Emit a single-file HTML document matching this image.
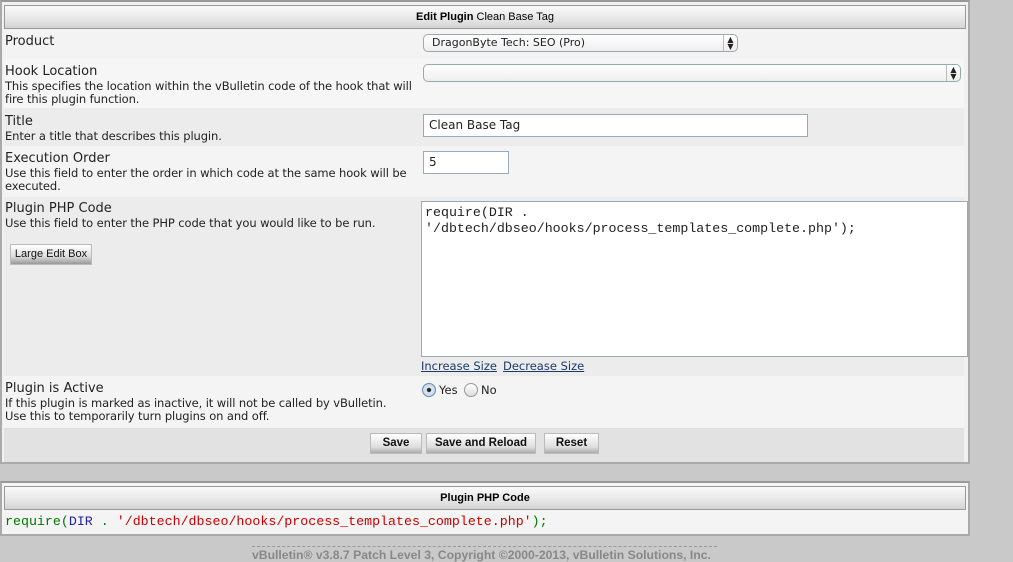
<!DOCTYPE html>
<html><head><meta charset="utf-8"><style>
*{box-sizing:border-box;margin:0;padding:0}
body{width:1013px;height:562px;background:#c9c9c9;font-family:"DejaVu Sans","Liberation Sans",sans-serif;position:relative;overflow:hidden;color:#222}
.a{position:absolute}
.panel{position:absolute;left:0;width:970px;border:2px solid #aaa;background:#fff;border-top-color:#999}
.hdr{position:absolute;left:2px;right:2px;height:24px;background:linear-gradient(#fafafa,#e6e6e6 60%,#d4d4d4);border:1px solid #999;font-family:"Liberation Sans",sans-serif;font-size:11px;text-align:center;line-height:23px;color:#000}
.row{position:absolute;left:2px;right:4px}
.l{position:absolute;left:1px;font-size:13px;color:#222}
.d{position:absolute;left:1px;font-size:11.5px;line-height:13px;color:#222;letter-spacing:-0.1px;white-space:nowrap}
.sel{position:absolute;height:18px;border:1px solid #9aa;border-radius:5px;background:linear-gradient(#fff,#eee);font-size:11px;line-height:16px;padding-left:8px}
.arr{position:absolute;right:0;top:0;width:14px;height:16px;border-left:1px solid #bbb;font-size:8px;line-height:7px;text-align:center;padding-top:1px}
.inp{position:absolute;height:23px;border:1px solid #9ab;background:#fff;font-size:12px;line-height:21px;padding-left:5px}
.btn{position:absolute;height:21px;background:linear-gradient(#fff,#ddd 70%,#aaa);border:1px solid #bbb;font-family:"Liberation Sans",sans-serif;font-weight:bold;font-size:11.5px;text-align:center;line-height:19px;color:#111;white-space:nowrap}
.mono{font-family:"Liberation Mono",monospace;font-size:13.3px}
</style></head><body>
<div class="panel" style="top:0;height:464px;background:#f1f1f1">
 <div class="hdr" style="top:3px"><b>Edit Plugin</b> Clean Base Tag</div>
 <div class="row" style="top:28px;height:29px;background:#f3f3f3"><div class="l" style="top:4px">Product</div></div>
 <div class="row" style="top:57px;height:49px;background:#f6f6f6"><div class="l" style="top:5px">Hook Location</div><div class="d" style="top:21px">This specifies the location within the vBulletin code of the hook that will<br>fire this plugin function.</div></div>
 <div class="row" style="top:106px;height:38px;background:#ececec"><div class="l" style="top:6px">Title</div><div class="d" style="top:22px">Enter a title that describes this plugin.</div></div>
 <div class="row" style="top:144px;height:51px;background:#f4f4f4"><div class="l" style="top:5px">Execution Order</div><div class="d" style="top:21px">Use this field to enter the order in which code at the same hook will be<br>executed.</div></div>
 <div class="row" style="top:195px;height:179px;background:#ececec"><div class="l" style="top:4px">Plugin PHP Code</div><div class="d" style="top:20px">Use this field to enter the PHP code that you would like to be run.</div>
  <div class="btn" style="left:6px;top:47px;width:82px;font-weight:normal;font-size:11px;background:linear-gradient(#fff,#ddd 60%,#999)">Large Edit Box</div></div>
 <div class="row" style="top:374px;height:52px;background:#f4f4f4"><div class="l" style="top:5px">Plugin is Active</div><div class="d" style="top:21px">If this plugin is marked as inactive, it will not be called by vBulletin.<br>Use this to temporarily turn plugins on and off.</div></div>
 <div class="row" style="top:426px;height:34px;background:#e2e2e2;border-top:1px solid #ddd"></div>
</div>
<div class="sel" style="left:423px;top:34px;width:315px">DragonByte Tech: SEO (Pro)<div class="arr">▲<br>▼</div></div>
<div class="sel" style="left:423px;top:64px;width:538px"><div class="arr">▲<br>▼</div></div>
<div class="inp" style="left:423px;top:114px;width:385px">Clean Base Tag</div>
<div class="inp" style="left:423px;top:151px;width:86px">5</div>
<div class="a mono" style="left:421px;top:201px;width:547px;height:156px;border:1px solid #9ab;background:#fff;padding:3px 3px;line-height:16px;color:#222">require(DIR .<br>'/dbtech/dbseo/hooks/process_templates_complete.php');</div>
<div class="a" style="left:421px;top:359px;font-size:11.5px;color:#1a3a6a;text-decoration:underline">Increase Size</div>
<div class="a" style="left:503px;top:359px;font-size:11.5px;color:#1a3a6a;text-decoration:underline">Decrease Size</div>
<div class="a" style="left:422px;top:383px;width:14px;height:14px;border-radius:50%;border:1px solid #6a8ab0;background:radial-gradient(#222 20%,#dde8f5 30%,#b8cde5)"></div>
<div class="a" style="left:439px;top:383px;font-size:11.5px">Yes</div>
<div class="a" style="left:464px;top:383px;width:14px;height:14px;border-radius:50%;border:1px solid #999;background:linear-gradient(#fff,#ddd)"></div>
<div class="a" style="left:481px;top:383px;font-size:11.5px">No</div>
<div class="btn" style="left:370px;top:433px;width:52px">Save</div>
<div class="btn" style="left:426px;top:433px;width:110px">Save and Reload</div>
<div class="btn" style="left:544px;top:433px;width:55px">Reset</div>
<div class="panel" style="top:481px;height:55px;background:#f4f4f4">
 <div class="hdr" style="top:3px;font-weight:bold">Plugin PHP Code</div>
 <div class="a mono" style="left:3px;top:31px"><span style="color:#070">require(</span><span style="color:#22a">DIR </span><span style="color:#070">. </span><span style="color:#c00">'/dbtech/dbseo/hooks/process_templates_complete.php'</span><span style="color:#070">);</span></div>
</div>
<div class="a" style="left:252px;top:546px;width:465px;border-top:1px dashed #999"></div>
<div class="a" style="left:252px;top:548px;font-family:'Liberation Sans',sans-serif;font-size:12.2px;font-weight:bold;color:#888;white-space:nowrap">vBulletin® v3.8.7 Patch Level 3, Copyright ©2000-2013, vBulletin Solutions, Inc.</div>
</body></html>
